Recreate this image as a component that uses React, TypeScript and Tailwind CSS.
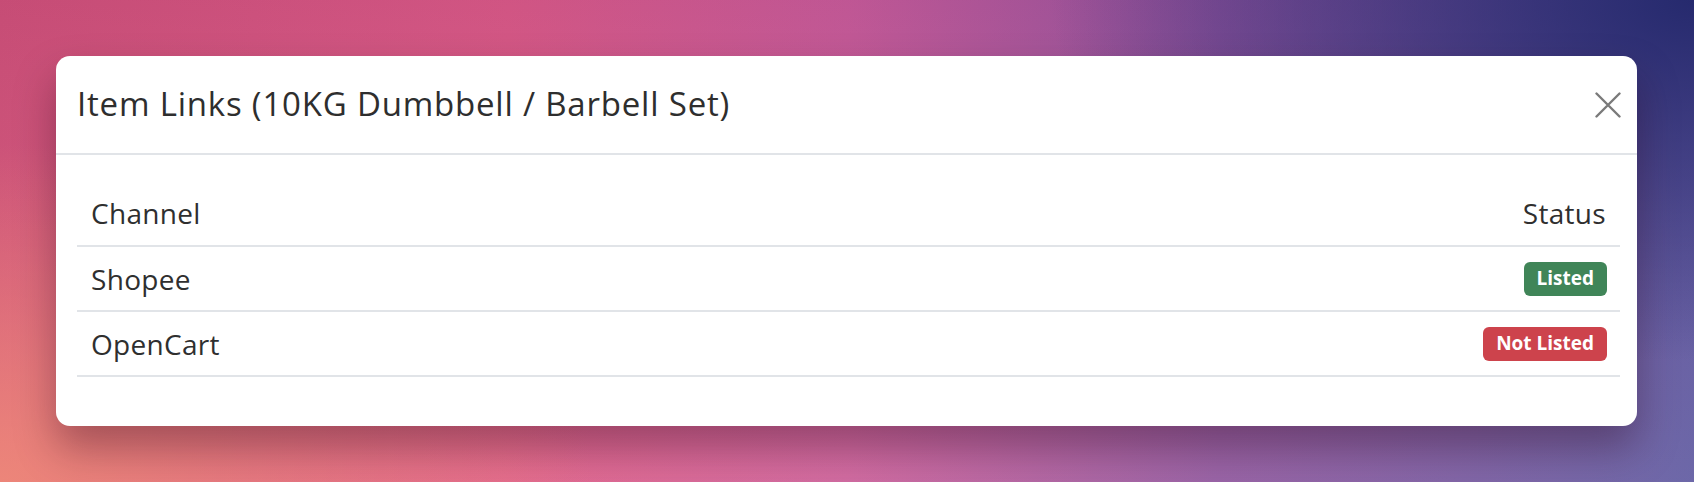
import React from 'react';

type Row = { channel: string; listed: boolean };

const rows: Row[] = [
  { channel: 'Shopee', listed: true },
  { channel: 'OpenCart', listed: false },
];

export default function App() {
  return (
    <div className="w-full h-[482px] overflow-hidden pt-[56px] pl-[56px] font-['Open_Sans',sans-serif] text-[#2f2f2f] bg-[radial-gradient(ellipse_38%_75%_at_100%_0%,rgba(38,42,110,1)_0%,rgba(38,42,110,0)_100%),radial-gradient(ellipse_35%_70%_at_0%_100%,rgba(240,140,120,0.85)_0%,rgba(240,140,120,0)_100%),linear-gradient(to_bottom,rgba(120,20,80,0.15),rgba(255,190,170,0.1)),linear-gradient(to_right,#d4567c_0%,#e0608c_30%,#cc62a0_50%,#8e5aa6_72%,#5c5ea8_100%)]">
      <div className="w-[1581px] h-[370px] bg-white rounded-[14px] shadow-[0_22px_40px_rgba(40,0,20,0.35)] flex flex-col">
        {/* Header */}
        <div className="h-[99px] flex items-center justify-between pl-[21px] pr-[16px] border-b-2 border-[#e1e4e8] shrink-0">
          <h5 className="text-[33px] font-medium tracking-[0.8px] leading-none text-[#2e2e2e] -mt-[2px]">
            Item Links (10KG Dumbbell / Barbell Set)
          </h5>
          <button className="w-[26px] h-[26px] flex items-center justify-center text-[#7a7a7a]">
            <svg width="26" height="26" viewBox="0 0 26 26" fill="none" stroke="currentColor" strokeWidth="2.4" strokeLinecap="round">
              <path d="M1.5 1.5 L24.5 24.5 M24.5 1.5 L1.5 24.5" />
            </svg>
          </button>
        </div>

        {/* Body */}
        <div className="pt-[26px] pl-[21px] pr-[17px]">
          <div className="flex items-center justify-between h-[66px] px-[14px] border-b-2 border-[#e1e4e8] text-[28px] tracking-[0.3px]">
            <span>Channel</span>
            <span>Status</span>
          </div>
          {rows.map((r) => (
            <div
              key={r.channel}
              className="flex items-center justify-between h-[65px] pl-[14px] pr-[13px] border-b-2 border-[#e1e4e8] text-[28px] tracking-[0.3px]"
            >
              <span>{r.channel}</span>
              <span
                className={
                  r.listed
                    ? 'h-[34px] px-[13px] flex items-center rounded-[6px] bg-[#408558] text-white text-[19px] font-bold tracking-normal'
                    : 'h-[34px] px-[13px] flex items-center rounded-[6px] bg-[#cd434c] text-white text-[19px] font-bold tracking-normal'
                }
              >
                {r.listed ? 'Listed' : 'Not Listed'}
              </span>
            </div>
          ))}
        </div>
      </div>
    </div>
  );
}
